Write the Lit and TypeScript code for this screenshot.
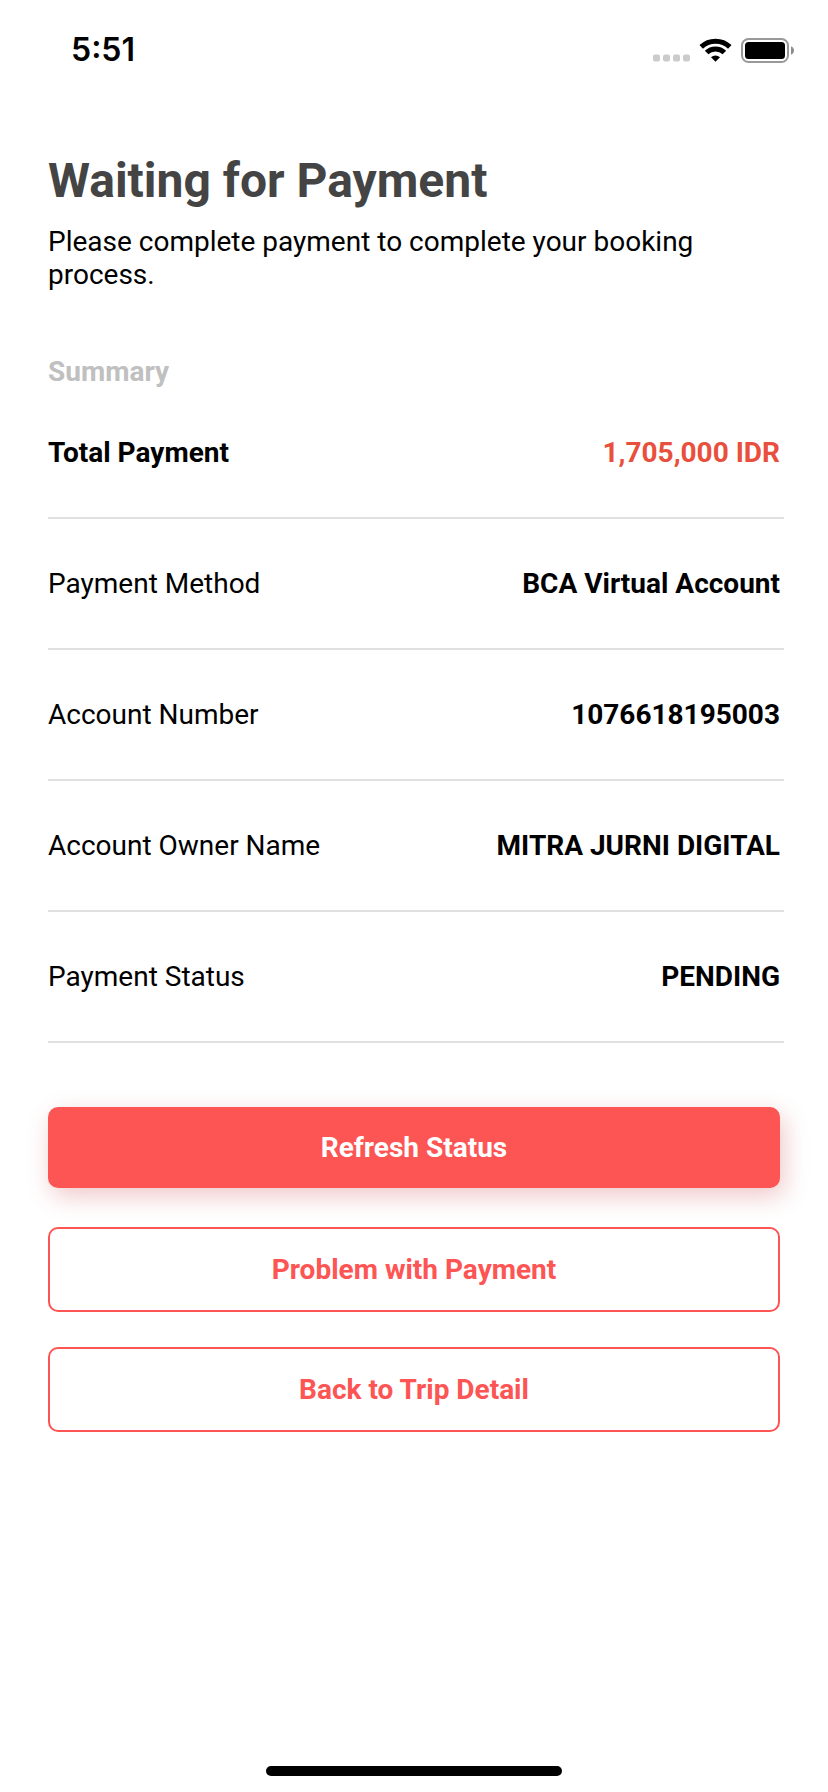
import { LitElement, html, css } from "lit";
import { customElement, property } from "lit/decorators.js";

interface SummaryRow {
  label: string;
  value: string;
  kind?: "total";
}

const ROWS: SummaryRow[] = [
  { label: "Total Payment", value: "1,705,000 IDR", kind: "total" },
  { label: "Payment Method", value: "BCA Virtual Account" },
  { label: "Account Number", value: "1076618195003" },
  { label: "Account Owner Name", value: "MITRA JURNI DIGITAL" },
  { label: "Payment Status", value: "PENDING" },
];

@customElement("status-bar")
export class StatusBar extends LitElement {
  static styles = css`
    :host {
      display: flex;
      align-items: center;
      justify-content: space-between;
      padding: 30px 34px 0 71px;
      color: #000;
    }
    .time {
      font: 600 32px/40px Inter, "Liberation Sans", sans-serif;
    }
    .icons {
      display: flex;
      align-items: center;
      gap: 9px;
    }
    .icons svg {
      display: block;
    }
  `;

  render() {
    return html`
      <time class="time">5:51</time>
      <div class="icons">
        <svg width="37" height="25" viewBox="0 0 37 25" fill="#cbcbcb" aria-hidden="true">
          <rect x="0" y="16.5" width="7" height="7" rx="2" />
          <rect x="10" y="16.5" width="7" height="7" rx="2" />
          <rect x="20" y="16.5" width="7" height="7" rx="2" />
          <rect x="30" y="16.5" width="7" height="7" rx="2" />
        </svg>
        <svg width="33" height="25" viewBox="0 0 33 25" aria-hidden="true">
          <g fill="none" stroke="#000" stroke-width="5">
            <path d="M2.2 8.9 A20.6 20.6 0 0 1 30.8 8.9" />
            <path d="M7.6 14.6 A12.6 12.6 0 0 1 25.4 14.6" />
          </g>
          <path d="M16.5 23.8 L12 19.2 A6.5 6.5 0 0 1 21 19.2 Z" />
        </svg>
        <svg width="53" height="25" viewBox="0 0 53 25" aria-hidden="true">
          <rect x="1" y="1" width="46" height="23" rx="6.5" fill="none" stroke="#999" stroke-width="2" />
          <rect x="4" y="4" width="40" height="17" rx="3.5" />
          <path d="M50 8.2 C54 9.6 54 15.4 50 16.8 Z" fill="#8c8c8c" />
        </svg>
      </div>
    `;
  }
}

@customElement("payment-summary")
export class PaymentSummary extends LitElement {
  @property({ attribute: false }) rows: SummaryRow[] = [];

  static styles = css`
    :host {
      display: block;
    }
    .list {
      margin: 0;
      display: grid;
      gap: 48px;
    }
    .row {
      display: flex;
      justify-content: space-between;
      gap: 16px;
      padding: 0 4px 48px 0;
      border-bottom: 2px solid #e0e0e0;
    }
    .value {
      margin: 0;
      font-weight: 700;
      text-align: right;
    }
    .total .label {
      font-weight: 700;
    }
    .total .value {
      color: #e94f3d;
    }
  `;

  render() {
    return html`
      <dl class="list">
        ${this.rows.map(
          (row) => html`
            <div class="row ${row.kind ?? ""}">
              <dt class="label">${row.label}</dt>
              <dd class="value">${row.value}</dd>
            </div>
          `
        )}
      </dl>
    `;
  }
}

@customElement("app-root")
export class AppRoot extends LitElement {
  static styles = css`
    :host {
      display: flex;
      flex-direction: column;
      min-height: 100vh;
      background: #fff;
      color: #000;
      font: 400 28px/33px Roboto, "Liberation Sans", sans-serif;
    }
    .page {
      flex: 1;
      padding: 83px 48px 48px;
    }
    .title {
      margin: 0 0 16px;
      color: #444;
      font-size: 48px;
      line-height: 56px;
      font-weight: 700;
    }
    .intro {
      margin: 0;
    }
    .section {
      margin: 64px 0 48px;
      color: #c0c0c0;
      font-size: 28px;
      line-height: 33px;
      font-weight: 700;
    }
    /* Dividers run slightly past the right edge of the text column. */
    .summary {
      margin-right: -4px;
    }
    .actions {
      display: grid;
      gap: 35px;
      margin-top: 64px;
    }
    .button {
      padding: 24px;
      border: 2px solid #fd5454;
      border-radius: 10px;
      background: #fff;
      color: #fd5454;
      font: inherit;
      font-weight: 700;
      cursor: pointer;
    }
    .primary {
      margin-bottom: 4px;
      border: 0;
      background: #fd5454;
      color: #fff;
      box-shadow: 4px 8px 24px rgba(195, 30, 40, 0.25);
    }
    .home {
      width: 296px;
      height: 10px;
      margin: 0 auto 16px;
      border-radius: 5px;
      background: #000;
    }
  `;

  render() {
    return html`
      <status-bar></status-bar>
      <main class="page">
        <h1 class="title">Waiting for Payment</h1>
        <p class="intro">Please complete payment to complete your booking process.</p>
        <h2 class="section">Summary</h2>
        <payment-summary class="summary" .rows=${ROWS}></payment-summary>
        <div class="actions">
          <button class="button primary" type="button">Refresh Status</button>
          <button class="button" type="button">Problem with Payment</button>
          <button class="button" type="button">Back to Trip Detail</button>
        </div>
      </main>
      <div class="home"></div>
    `;
  }
}
